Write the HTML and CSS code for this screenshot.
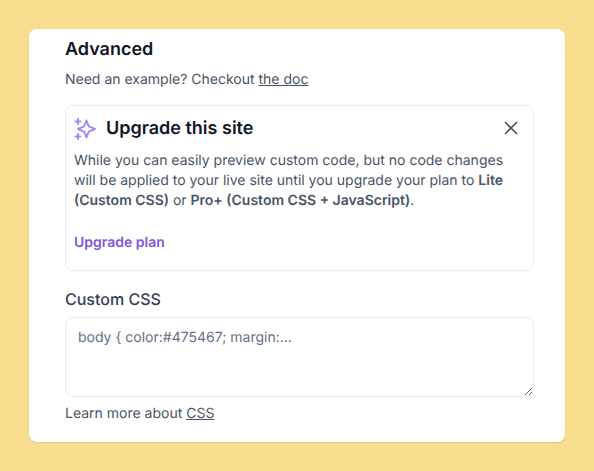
FILE: index.html
```html
<!DOCTYPE html>
<html lang="en">
<head>
<meta charset="utf-8">
<title>Advanced</title>
<link rel="stylesheet" href="styles.css">
</head>
<body>
<main class="card">
  <h2 class="title">Advanced</h2>
  <p class="hint">Need an example? Checkout <a href="#">the doc</a></p>
  <section class="notice">
    <div class="notice-head">
      <svg class="sparkle" width="24" height="24" viewBox="0 0 24 24" fill="none" stroke="#a78bea" stroke-width="2" stroke-linecap="round" stroke-linejoin="round">
        <path d="M5 2v5M2.500 4.500h5M5 17v5M2.500 19.500h5M13.500 3.500l1.900 5a2 2 0 0 0 1.200 1.200l5.400 2.300-5.400 2.300a2 2 0 0 0-1.200 1.200l-1.900 5-1.900-5a2 2 0 0 0-1.200-1.200L5 12l5.400-2.300a2 2 0 0 0 1.200-1.200z"/>
      </svg>
      <h3 class="notice-title">Upgrade this site</h3>
      <svg class="close" width="20" height="20" viewBox="0 0 20 20" fill="none" stroke="#475467" stroke-width="1.700" stroke-linecap="round">
        <path d="M4.500 4.500l11 11M15.500 4.500l-11 11"/>
      </svg>
    </div>
    <p class="notice-text">While you can easily preview custom code, but no code changes will be applied to your live site until you upgrade your plan to <strong>Lite (Custom CSS)</strong> or <strong>Pro+ (Custom CSS + JavaScript)</strong>.</p>
    <a class="upgrade" href="#">Upgrade plan</a>
  </section>
  <label class="field-label" for="css">Custom CSS</label>
  <textarea class="code" id="css" placeholder="body { color:#475467; margin:..."></textarea>
  <p class="learn">Learn more about <a href="#">CSS</a></p>
</main>
</body>
</html>
```
FILE: styles.css
```css
* { box-sizing: border-box; }
html, body { margin: 0; height: 100%; }
body {
  background: #f9dd8f;
  font-family: Inter, "Liberation Sans", sans-serif;
  color: #475467;
  padding: 29px;
  overflow: hidden;
  text-rendering: geometricPrecision;
}
.card {
  width: 536px;
  height: 413px;
  background: #fff;
  border-radius: 8px;
  padding: 9px 31px 0 36px;
  box-shadow: 0 1px 2px rgba(16, 24, 40, 0.12);
}
.title {
  margin: 0;
  font-size: 18px;
  line-height: 24px;
  font-weight: 600;
  color: #101828;
}
.hint {
  margin: 8px 0 0;
  font-size: 14px;
  line-height: 20px;
}
a { color: inherit; }
.notice {
  margin-top: 15px;
  height: 166px;
  border: 1px solid #eaecf0;
  border-radius: 8px;
  padding: 10px 8px 0;
}
.notice-head {
  display: flex;
  align-items: center;
  height: 26px;
}
.sparkle { flex: none; margin-left: -1px; }
.notice-title {
  margin: 0 0 0 9px;
  flex: 1;
  font-size: 18px;
  line-height: 26px;
  font-weight: 600;
  color: #101828;
}
.close { flex: none; margin: 0 4px 2px 0; }
.notice-text {
  margin: 9px 0 0;
  font-size: 14px;
  line-height: 20px;
}
.notice-text strong { font-weight: 600; }
.upgrade {
  display: block;
  margin-top: 20px;
  font-size: 14px;
  line-height: 24px;
  font-weight: 600;
  color: #7f56d9;
  text-decoration: none;
}
.field-label {
  display: block;
  margin-top: 17px;
  font-size: 16px;
  line-height: 22px;
  font-weight: 500;
  color: #344054;
}
.code {
  display: block;
  width: 100%;
  height: 80px;
  margin-top: 7px;
  border: 1px solid #eaecf0;
  border-radius: 8px;
  padding: 10px 12px;
  font-family: inherit;
  font-size: 14px;
  line-height: 20px;
  color: #475467;
  outline: none;
  text-rendering: geometricPrecision;
}
.code::placeholder { color: #667085; opacity: 1; }
.learn {
  margin: 7px 0 0;
  font-size: 14px;
  line-height: 20px;
}
```
